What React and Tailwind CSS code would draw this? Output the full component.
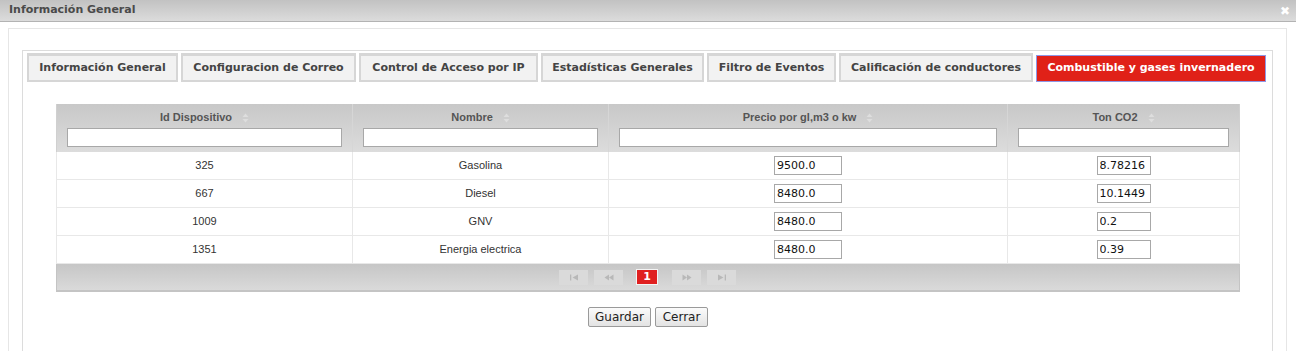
import { useState } from 'react'

const tabs = [
  { label: 'Información General', w: 'w-[151px]' },
  { label: 'Configuracion de Correo', w: 'w-[175px]' },
  { label: 'Control de Acceso por IP', w: 'w-[179px]' },
  { label: 'Estadísticas Generales', w: 'w-[163px]' },
  { label: 'Filtro de Eventos', w: 'w-[129px]' },
  { label: 'Calificación de conductores', w: 'w-[194px]' },
  { label: 'Combustible y gases invernadero', w: 'w-[230px]' },
]

const rows = [
  { id: '325', nombre: 'Gasolina', precio: '9500.0', co2: '8.78216' },
  { id: '667', nombre: 'Diesel', precio: '8480.0', co2: '10.1449' },
  { id: '1009', nombre: 'GNV', precio: '8480.0', co2: '0.2' },
  { id: '1351', nombre: 'Energia electrica', precio: '8480.0', co2: '0.39' },
]

const cols = [
  { label: 'Id Dispositivo', w: 'w-[296px]' },
  { label: 'Nombre', w: 'w-[256px]' },
  { label: 'Precio por gl,m3 o kw', w: 'w-[399px]' },
  { label: 'Ton CO2', w: 'flex-1' },
]

function SortIcon() {
  return (
    <svg width="7" height="10" viewBox="0 0 7 10" className="ml-[10px]">
      <path d="M3.5 0.5 L6.5 4 L0.5 4 Z" fill="#dedede" />
      <path d="M3.5 9.5 L6.5 6 L0.5 6 Z" fill="#dedede" />
    </svg>
  )
}

function PagerIcon({ kind }) {
  const c = '#b8b8b8'
  return (
    <svg width="10" height="7" viewBox="0 0 10 7">
      {kind === 'first' && (
        <>
          <rect x="1" y="0.5" width="1.3" height="6" fill={c} />
          <path d="M9 0.5 L3.5 3.5 L9 6.5 Z" fill={c} />
        </>
      )}
      {kind === 'prev' && (
        <>
          <path d="M5 0.5 L0.5 3.5 L5 6.5 Z" fill={c} />
          <path d="M9.5 0.5 L5 3.5 L9.5 6.5 Z" fill={c} />
        </>
      )}
      {kind === 'next' && (
        <>
          <path d="M0.5 0.5 L5 3.5 L0.5 6.5 Z" fill={c} />
          <path d="M5 0.5 L9.5 3.5 L5 6.5 Z" fill={c} />
        </>
      )}
      {kind === 'last' && (
        <>
          <path d="M1 0.5 L6.5 3.5 L1 6.5 Z" fill={c} />
          <rect x="7.7" y="0.5" width="1.3" height="6" fill={c} />
        </>
      )}
    </svg>
  )
}

function PagerBtn({ kind }) {
  return (
    <div className="w-[29px] h-[15px] bg-[#dadada] flex items-center justify-center">
      <PagerIcon kind={kind} />
    </div>
  )
}

export default function App() {
  const [active, setActive] = useState(6)
  const [data, setData] = useState(rows)

  const update = (i, key, val) => {
    setData(d => d.map((r, j) => (j === i ? { ...r, [key]: val } : r)))
  }

  return (
    <div className="w-[1296px] h-[351px] overflow-hidden bg-white font-['DejaVu_Sans',Verdana,sans-serif]">
      {/* Title bar */}
      <div className="h-[22px] flex items-center justify-between pl-[9px] pr-[6px] bg-gradient-to-b from-[#c2c2c2] to-[#dcdcdc] border-b border-[#b3b3b3]">
        <span className="text-[11px] font-bold text-[#4a4a4a]">Información General</span>
        <span className="text-[12px] font-bold text-white leading-none">✖</span>
      </div>

      {/* Outer panel */}
      <div className="mt-[6px] ml-[8px] mr-[9px] border border-[#e6e6e6] pt-[21px] px-[13px] h-[400px]">
        {/* Tabs container */}
        <div className="border border-[#dcdcdc] pt-[2px] pl-[4px] h-[400px]">
          <div className="flex gap-[3px]">
            {tabs.map((t, i) =>
              i === active ? (
                <button
                  key={t.label}
                  onClick={() => setActive(i)}
                  className={`${t.w} h-[27px] mt-[2px] flex items-center justify-center bg-[#e02118] border border-[#8f97e6] text-white text-[11px] font-bold`}
                >
                  {t.label}
                </button>
              ) : (
                <button
                  key={t.label}
                  onClick={() => setActive(i)}
                  className={`${t.w} h-[29px] flex items-center justify-center bg-[#f2f2f2] border-t-[3px] border-x-[2px] border-b-[2px] border-[#d6d6d6] text-[#444] text-[11px] font-bold`}
                >
                  {t.label}
                </button>
              )
            )}
          </div>

          {/* Table */}
          <div className="ml-[29px] mr-[32px] mt-[22px] font-['Liberation_Sans',Arial,sans-serif]">
            <div className="flex bg-gradient-to-b from-[#c8c8c8] to-[#dcdcdc] h-[48px] border-x border-[#d0d0d0]">
              {cols.map((c, i) => (
                <div
                  key={c.label}
                  className={`${c.w} flex flex-col px-[10px] ${i < 3 ? 'border-r border-[#d6d6d6]' : ''}`}
                >
                  <div className="h-[24px] flex items-center justify-center pt-[3px] text-[11px] font-bold text-[#555]">
                    {c.label}
                    <SortIcon />
                  </div>
                  <input className="h-[19px] w-full bg-white border border-[#a8a8a8] outline-none" />
                </div>
              ))}
            </div>

            {data.map((r, i) => (
              <div key={r.id} className="flex h-[28px] border-b border-x border-[#e8e8e8] text-[11px] text-[#333]">
                <div className="w-[296px] border-r border-[#e8e8e8] flex items-center justify-center">{r.id}</div>
                <div className="w-[256px] border-r border-[#e8e8e8] flex items-center justify-center">{r.nombre}</div>
                <div className="w-[399px] border-r border-[#e8e8e8] flex items-center justify-center">
                  <input
                    value={r.precio}
                    onChange={e => update(i, 'precio', e.target.value)}
                    className="w-[68px] h-[19px] border border-[#a8a8a8] px-[2px] text-[11px] text-[#111] font-['DejaVu_Sans',Verdana,sans-serif] outline-none"
                  />
                </div>
                <div className="flex-1 flex items-center justify-center">
                  <input
                    value={r.co2}
                    onChange={e => update(i, 'co2', e.target.value)}
                    className="w-[54px] h-[19px] border border-[#a8a8a8] px-[2px] text-[11px] text-[#111] font-['DejaVu_Sans',Verdana,sans-serif] outline-none"
                  />
                </div>
              </div>
            ))}

            {/* Pager */}
            <div className="h-[28px] bg-gradient-to-b from-[#c6c6c6] to-[#dadada] border-x border-b-2 border-[#c4c4c4] flex items-center justify-center">
              <div className="flex items-center ml-[-1px]">
                <PagerBtn kind="first" />
                <div className="w-[6px]" />
                <PagerBtn kind="prev" />
                <div className="w-[13px]" />
                <div className="w-[22px] h-[16px] bg-[#e02020] border border-[#f4f4f4] flex items-center justify-center text-white text-[11px] font-bold font-['DejaVu_Sans',Verdana,sans-serif]">
                  1
                </div>
                <div className="w-[14px]" />
                <PagerBtn kind="next" />
                <div className="w-[6px]" />
                <PagerBtn kind="last" />
              </div>
            </div>

            {/* Buttons */}
            <div className="flex justify-center gap-[4px] mt-[15px]">
              <button className="w-[63px] h-[20px] border border-[#9a9a9a] rounded-[2px] bg-gradient-to-b from-[#fbfbfb] to-[#e3e3e3] text-[12px] text-[#222] font-['DejaVu_Sans',Verdana,sans-serif]">
                Guardar
              </button>
              <button className="w-[53px] h-[20px] border border-[#9a9a9a] rounded-[2px] bg-gradient-to-b from-[#fbfbfb] to-[#e3e3e3] text-[12px] text-[#222] font-['DejaVu_Sans',Verdana,sans-serif]">
                Cerrar
              </button>
            </div>
          </div>
        </div>
      </div>
    </div>
  )
}
